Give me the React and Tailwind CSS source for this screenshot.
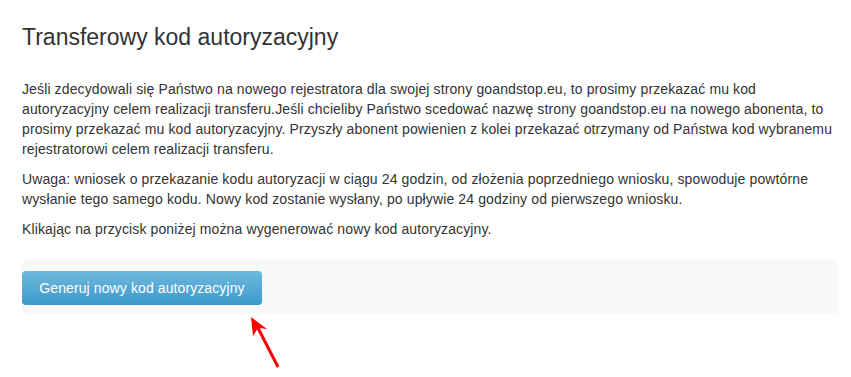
export default function App() {
  return (
    <div className="relative min-h-[377px] bg-white pl-[22px] pr-[13px] pt-[25px] text-[#333333] [font-family:'Liberation_Sans',Arial,sans-serif]">
      <h3 className="mb-[29px] text-[23px] font-normal leading-[25px] text-[#333333]">
        Transferowy kod autoryzacyjny
      </h3>
      <p className="mb-[10px] text-[14px] leading-[20px] tracking-[0.12px]">
        Jeśli zdecydowali się Państwo na nowego rejestratora dla swojej strony goandstop.eu, to prosimy przekazać mu kod autoryzacyjny celem realizacji transferu.Jeśli chcieliby Państwo scedować nazwę strony goandstop.eu na nowego abonenta, to prosimy przekazać mu kod autoryzacyjny. Przyszły abonent powienien z kolei przekazać otrzymany od Państwa kod wybranemu rejestratorowi celem realizacji transferu.
      </p>
      <p className="mb-[10px] text-[14px] leading-[20px] tracking-[0.12px]">
        Uwaga: wniosek o przekazanie kodu autoryzacji w ciągu 24 godzin, od złożenia poprzedniego wniosku, spowoduje powtórne wysłanie tego samego kodu. Nowy kod zostanie wysłany, po upływie 24 godziny od pierwszego wniosku.
      </p>
      <p className="mb-[21px] text-[14px] leading-[20px] tracking-[0.12px]">
        Klikając na przycisk poniżej można wygenerować nowy kod autoryzacyjny.
      </p>
      <div className="rounded-[4px] bg-[#f9f8f9] pb-[9px] pt-[11px]">
        <button className="h-[34px] w-[240px] rounded-[4px] bg-gradient-to-b from-[#6fb8dd] to-[#3a99cc] text-[14px] leading-[20px] tracking-[0.1px] text-white [font-family:'Liberation_Sans',Arial,sans-serif]">
          Generuj nowy kod autoryzacyjny
        </button>
      </div>
      <svg
        className="absolute left-[240px] top-[305px]"
        width="50"
        height="70"
        viewBox="240 305 50 70"
      >
        <line x1="257.5" y1="327" x2="278" y2="367" stroke="#ff0000" strokeWidth="3" />
        <polygon points="251,317 253,336 258,328 267,329" fill="#ff0000" />
      </svg>
    </div>
  );
}
